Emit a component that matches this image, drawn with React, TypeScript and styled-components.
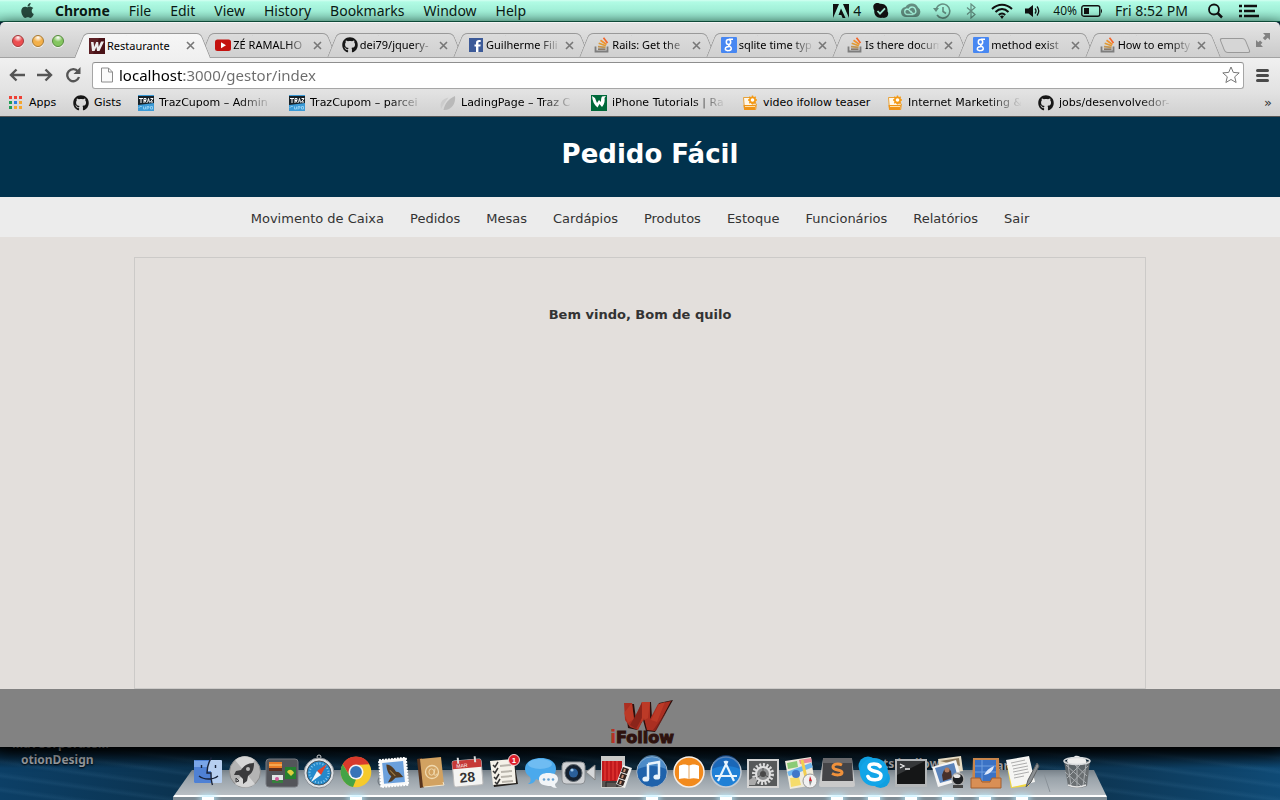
import React from "react";
import styled, { createGlobalStyle } from "styled-components";
import { FaApple, FaGithub } from "react-icons/fa";

const Global = createGlobalStyle`
  *, *::before, *::after { box-sizing: border-box; }
  body { margin: 0; background: #0b2436; }
  button { border: 0; padding: 0; background: none; font: inherit; color: inherit; cursor: pointer; }
  a { color: inherit; text-decoration: none; }
  svg { display: block; flex: none; }
`;

const system = `"Noto Sans", "Open Sans", sans-serif`;
const web = `Verdana, "DejaVu Sans", sans-serif`;

const Screen = styled.div`
  display: flex;
  flex-direction: column;
  min-height: 100vh;
  overflow: hidden;
  font-family: ${system};
`;

/* ---------- menu bar ---------- */

const MenuBar = styled.div`
  display: flex;
  align-items: center;
  justify-content: space-between;
  height: 22px;
  padding: 0 21px 0 19px;
  border-bottom: 1px solid #14654c;
  background: linear-gradient(#d4fff2 0, #b0fbe4 2px, #a2f0d8 11px, #86d6bd 21px);
  color: #0b1a15;
  font-size: 14px;
  line-height: 20px;
  white-space: nowrap;
`;

const Menus = styled.nav`
  display: flex;
  align-items: center;
  gap: 19px;
`;

const MenuItem = styled.button<{ $bold?: boolean }>`
  font-weight: ${(p) => (p.$bold ? 700 : 400)};
`;

const Status = styled.div`
  display: flex;
  align-items: center;
  gap: 12px;
`;

const StatusButton = styled.button<{ $faded?: boolean }>`
  display: flex;
  align-items: center;
  gap: 4px;
  opacity: ${(p) => (p.$faded ? 0.45 : 1)};
`;

const Percent = styled.span`
  font-size: 12px;
`;

const Clock = styled.time`
  min-width: 76px;
  font-size: 14px;
`;

/* ---------- browser window ---------- */

const Window = styled.div`
  display: flex;
  flex: 1;
  flex-direction: column;
  position: relative;
  z-index: 1;
  box-shadow: 0 4px 14px #000;
`;

const TabStrip = styled.div`
  display: flex;
  align-items: flex-end;
  height: 36px;
  padding: 0 10px 0 12px;
  border-top: 1px solid #f4f4f4;
  border-radius: 5px 5px 0 0;
  background: linear-gradient(#e4e4e4, #cacaca 34px, #a2a2a2 34px);
`;

const Lights = styled.div`
  display: flex;
  gap: 8px;
  width: 67px;
  padding-bottom: 11px;
`;

const Light = styled.button<{ $color: string; $edge: string }>`
  width: 12px;
  height: 12px;
  border: 1px solid ${(p) => p.$edge};
  border-radius: 50%;
  background: radial-gradient(circle at 50% 15%, #fff 0, transparent 45%), ${(p) => p.$color};
  box-shadow: 0 1px 0 #f2f2f2;
`;

const Tabs = styled.div`
  display: flex;
  flex: 1;
  min-width: 0;
`;

const Tab = styled.div<{ $active?: boolean }>`
  display: flex;
  flex: 1;
  align-items: center;
  gap: 2px;
  position: relative;
  z-index: ${(p) => (p.$active ? 2 : 1)};
  min-width: 0;
  height: ${(p) => (p.$active ? 25 : 24)}px;
  margin-bottom: ${(p) => (p.$active ? 0 : 1)}px;
  padding: 0 10px;
  color: #000;
  font-size: 11px;
  line-height: 16px;

  &::before,
  &::after {
    content: "";
    position: absolute;
    z-index: -1;
    top: 0;
    bottom: 0;
    border-top: 1px solid #999;
    background: ${(p) => (p.$active ? "linear-gradient(#f6f6f6, #f0f0f0)" : "linear-gradient(#dcdcdc, #d0d0d0)")};
  }
  &::before {
    left: 0;
    right: 50%;
    border-left: 1px solid #999;
    border-top-left-radius: 5px;
    transform: skewX(-22deg);
  }
  &::after {
    left: 40%;
    right: 0;
    border-right: 1px solid #999;
    border-top-right-radius: 5px;
    transform: skewX(22deg);
  }
`;

const Fade = styled.span<{ $width?: number; $fade?: boolean }>`
  display: block;
  flex: ${(p) => (p.$width ? "none" : 1)};
  width: ${(p) => (p.$width ? `${p.$width}px` : "auto")};
  min-width: 0;
  white-space: nowrap;
  mask-image: ${(p) => (p.$fade ? "linear-gradient(90deg, #000 70%, transparent)" : "none")};
`;

const Close = styled.button`
  padding-left: 2px;
`;

const NewTab = styled.button`
  width: 26px;
  height: 15px;
  margin: 0 8px 5px 6px;
  border: 1px solid #999;
  border-radius: 3px;
  background: #d6d6d6;
  transform: skewX(22deg);
`;

const FullScreen = styled.button`
  padding-bottom: 11px;
`;

const Toolbar = styled.div`
  display: flex;
  align-items: center;
  height: 34px;
  padding: 0 11px 0 9px;
  background: linear-gradient(#f0f0f0, #e2e2e2);
`;

const NavButtons = styled.div`
  display: flex;
  align-items: center;
  gap: 12px;
  width: 83px;
`;

const Omnibox = styled.div`
  display: flex;
  flex: 1;
  align-items: center;
  gap: 6px;
  height: 27px;
  margin-right: 12px;
  padding: 0 3px 0 8px;
  border: 1px solid #a6a6a6;
  border-top-color: #8e8e8e;
  border-radius: 3px;
  background: #fff;
`;

const Address = styled.input`
  flex: 1;
  min-width: 0;
  height: 24px;
  padding: 0;
  border: 0;
  outline: 0;
  background: linear-gradient(90deg, #000 65px, #6b6b6b 65px);
  background-clip: text;
  -webkit-text-fill-color: transparent;
  font: 15px/24px ${system};
`;

const Bookmarks = styled.div`
  display: flex;
  align-items: center;
  gap: 16px;
  height: 25px;
  padding: 0 8px 2px;
  border-bottom: 1px solid #555;
  background: linear-gradient(#e2e2e2, #d0d0d0);
  color: #000;
  font-family: "DejaVu Sans", sans-serif;
  font-size: 11px;
  line-height: 16px;
`;

const Bookmark = styled.a`
  display: flex;
  align-items: center;
  gap: 5px;
  min-width: 0;
`;

const More = styled.button`
  margin-left: auto;
  color: #333;
  font-size: 13px;
`;

/* ---------- web page ---------- */

const Page = styled.div`
  display: flex;
  flex: 1;
  flex-direction: column;
  background: #e3dfdc;
  color: #333;
  font-family: ${web};
`;

const PageHeader = styled.header`
  height: 80px;
  padding: 18px 0 0 20px;
  background: #01324d;
  color: #fff;
  text-align: center;
`;

const Title = styled.h1`
  margin: 0;
  font-size: 26px;
  line-height: 38px;
`;

const PageNav = styled.nav`
  display: flex;
  flex-wrap: wrap;
  align-items: center;
  justify-content: center;
  gap: 0 26px;
  min-height: 40px;
  padding-top: 3px;
  background: #ececec;
  font-size: 13px;
  line-height: 20px;
`;

const Main = styled.main`
  display: flex;
  flex: 1;
  flex-direction: column;
  align-items: center;
  padding-top: 20px;
`;

const Panel = styled.section`
  flex: 1;
  width: 90%;
  max-width: 1012px;
  padding-top: 47px;
  border: 1px solid #cccac8;
  text-align: center;
`;

const Welcome = styled.h2`
  margin: 0;
  font-size: 13px;
  line-height: 20px;
`;

const PageFooter = styled.footer`
  display: flex;
  justify-content: center;
  height: 58px;
  padding: 8px 0 0 6px;
  background: #828282;
`;

/* ---------- desktop and dock ---------- */

const Desktop = styled.div`
  display: flex;
  justify-content: center;
  position: relative;
  height: 53px;
  overflow: hidden;
  background:
    linear-gradient(#02080d, transparent 40%),
    repeating-linear-gradient(8deg, transparent 0 7px, rgba(120, 180, 220, 0.08) 10px, transparent 14px),
    linear-gradient(90deg, #0c3f66 0, #0b3350 14%, #0a2436 35%, #0a2334 65%, #0d3552 85%, #0f4a75 100%);
`;

const DesktopLabel = styled.span<{ $left: number; $top: number }>`
  position: absolute;
  left: ${(p) => p.$left}px;
  top: ${(p) => p.$top}px;
  color: #999da1;
  font-size: 12px;
  font-weight: 700;
  line-height: 16px;
  text-align: center;
  text-shadow: 0 1px 2px #000;
  white-space: nowrap;
`;

const Dock = styled.div`
  display: flex;
  position: relative;
  width: 934px;
  padding: 0 12px 0 16px;

  &::before {
    content: "";
    position: absolute;
    left: 0;
    right: 0;
    top: 23px;
    height: 27px;
    clip-path: polygon(19px 0, calc(100% - 13px) 0, 100% 100%, 0 100%);
    background: linear-gradient(#78828a, #99a2a9 8px, #b9bfc4 25px, #fff 25px);
  }
  &::after {
    content: "";
    position: absolute;
    left: 0;
    right: 0;
    top: 50px;
    height: 3px;
    background: #7f8c95;
  }
`;

const DockItem = styled.button<{ $running?: boolean }>`
  display: flex;
  flex: none;
  flex-direction: column;
  align-items: center;
  justify-content: space-between;
  position: relative;
  z-index: 1;
  width: 37px;
  height: 53px;
  padding-top: 7px;

  &::after {
    content: "";
    display: ${(p) => (p.$running ? "block" : "none")};
    width: 12px;
    height: 3px;
    background: #fff;
    box-shadow: 0 0 6px 2px #b8ecff;
  }
`;

const Separator = styled.div`
  position: relative;
  flex: none;
  width: 18px;
  height: 53px;
`;

/* ---------- favicons ---------- */

const WIcon = () => (
  <svg width="16" height="16" viewBox="0 0 16 16">
    <rect width="16" height="16" fill="#4a1217" />
    <path d="M0 0h10L4 16H0z" fill="#6a2a2e" opacity=".6" />
    <path d="M2 4h2.500l.7 5 2-5h2l.5 5 2.300-5.500H15L10.500 13H8l-.6-4-1.800 4H3z" fill="#eee" />
  </svg>
);
const TubeIcon = () => (
  <svg width="16" height="16" viewBox="0 0 16 16">
    <rect y="2.500" width="16" height="11.500" rx="2.500" fill="#c4120f" />
    <path d="M6 5.200v6l5-3z" fill="#fff" />
  </svg>
);
const FbIcon = () => (
  <svg width="16" height="16" viewBox="0 0 16 16">
    <rect x="1" y="1" width="14" height="14" fill="#3c5a98" />
    <path d="M8 15V9.500H6.500v-2H8V6c0-2.200 1-3 3-3h1.700v2h-1.200c-.9 0-1.100.4-1.100 1.200v1.300h2.300l-.3 2h-2V15z" fill="#fff" />
  </svg>
);
const StackIcon = () => (
  <svg width="16" height="16" viewBox="0 0 16 16" fill="none" strokeWidth="1.700">
    <path d="M1.500 9.500v5h12v-5" stroke="#7d7d7d" strokeWidth="1.800" />
    <path d="M4 12.200h7.500" stroke="#8a7a68" />
    <path d="M4 9.600l7.600.8" stroke="#c39552" />
    <path d="M4.700 6.300l7.100 2.500" stroke="#df9a33" />
    <path d="M6.500 3.300l6 4.200" stroke="#f0912b" />
    <path d="M9.500.800l4 5.200" stroke="#f2652a" />
  </svg>
);
const GoogleIcon = () => (
  <svg width="16" height="16" viewBox="0 0 16 16">
    <rect width="16" height="16" rx="1" fill="#4787f2" />
    <g fill="none" stroke="#fff" strokeWidth="1.500">
      <ellipse cx="7.500" cy="5" rx="2.200" ry="2.500" />
      <path d="M8 2.200h4M8 7.500c-1.600 1.400 2.600 1.600 2.300 4.100-.3 2.700-6 2.600-6 .3 0-2 2.200-2.400 4.400-2.300" />
    </g>
  </svg>
);
const TrazIcon = () => (
  <svg width="16" height="16" viewBox="0 0 16 16">
    <rect width="16" height="16" fill="#3b9ad6" />
    <path d="M0 1h16v7L0 10z" fill="#182228" />
    <path d="M1 3.500h4M3 3.500v4.500M6 8V3.500h2v2H6l2.500 2M9.500 7.500l1-4 1 4M12.500 3.500h2.500l-2.500 3.500h2.500" stroke="#fff" fill="none" />
    <path d="M1 13c0-2 3-2 3-1M5.500 11.500v2.500h2v-2.500M9 14.500v-3h2v1.500h-2M12.500 11.500h2v2.500h-2z" stroke="#8fcdf0" fill="none" />
  </svg>
);
const LeafIcon = () => (
  <svg width="16" height="16" viewBox="0 0 16 16">
    <path d="M1 14C-.5 7 2.500 4 8.500 2.500 5 7 3 10 1 14z" fill="#ccc" />
    <path d="M3.500 15C5 8 8.500 4 15 1c1 7-3 14.500-11.500 14z" fill="#b9b9b9" />
  </svg>
);
const TutorIcon = () => (
  <svg width="16" height="16" viewBox="0 0 16 16">
    <rect width="16" height="16" fill="#00693a" />
    <path d="M1 1c.5 5 2 9 5.500 11.500L8.500 9l2.500 3c2.500-3 3-6 2.500-9L15 1l-4 .5c-1 2-1 3-1 5.500L8 5 6 8 4 3z" fill="#fff" />
  </svg>
);
const ShopIcon = () => (
  <svg width="16" height="16" viewBox="0 0 16 16">
    <path d="M1.500 2.500h8v6l5 .5-.8 5.500H2.500z" fill="#fff8ea" stroke="#e6a23c" />
    <path d="M1.500 10h12.500l-.8 5h-11z" fill="#ef9418" />
    <path d="M3 11.500h10" stroke="#ffe0a5" />
    <circle cx="10.500" cy="5" r="3.500" fill="#f49a16" />
    <path d="M10.500.5v9M6 5h9M7.300 1.800l6.400 6.400M13.700 1.800L7.300 8.200" stroke="#f49a16" strokeWidth="1.400" />
    <circle cx="10.500" cy="5" r="1.800" fill="#fff" />
  </svg>
);
const AppsIcon = () => (
  <svg width="16" height="16" viewBox="0 0 16 16">
    {["#ee4035", "#ee4035", "#ee4035", "#1f9d55", "#2b7de0", "#f4a52c", "#1f9d55", "#f4a52c", "#f4a52c"].map((c, i) => (
      <rect key={i} x={1 + (i % 3) * 5} y={1 + Math.floor(i / 3) * 5} width="3" height="3" fill={c} />
    ))}
  </svg>
);
const Cat = () => <FaGithub size={16} color="#161616" />;

/* ---------- dock drawings ---------- */

const Pic = ({ children }: { children: React.ReactNode }) => (
  <svg width="36" height="36" viewBox="0 0 36 36">{children}</svg>
);

const dock: { name: string; on?: boolean; art: React.ReactNode }[] = [
  { name: "Finder", on: true, art: <>
    <rect x="4" y="6" width="28" height="23" rx="1" fill="#b7cff0" />
    <path d="M5 6h15c-2 4-3 7-3 11h4v12H5c-1 0-1-1-1-1V7c0-1 1-1 1-1z" fill="#4f81d4" />
    <path d="M4 7h15l-2 6H4z" fill="#79a5e8" />
    <path d="M21.500 3.500C18 9 17 13 17 19h4c0 4 0 8 1.500 12M9 22c5 4 14 4 19 0M11.500 11v3M25.500 11v3" fill="none" stroke="#182238" strokeWidth="1.400" />
  </> },
  { name: "Launchpad", art: <>
    <circle cx="18" cy="18" r="15.500" fill="#b4b4b4" stroke="#8b8b8b" />
    <path d="M18 18L8 6C15 0 22 2 28 6zM18 18l10 12c-6 5-14 4-20 0z" fill="#dedede" opacity=".8" />
    <path d="M27 9c-7 0-10 3-13 7l-5 1-2 4 5 0 4 4 0 5 4-3 1-5c4-3 6-6 6-13z" fill="#3b3b3d" />
    <circle cx="21" cy="15" r="2" fill="#bbb" /><path d="M9 24l3 3-3 1z" stroke="#3b3b3d" fill="none" />
  </> },
  { name: "Mission Control", art: <>
    <rect x="2" y="5" width="32" height="28" rx="3" fill="#53555a" stroke="#777a80" />
    <rect x="5" y="8" width="13" height="9" fill="#e77b26" /><path d="M5 14h13v3H5z" fill="#5b2c1c" /><path d="M5 11h13" stroke="#ffd27a" />
    <rect x="21" y="13" width="11" height="12" fill="#25802f" /><path d="M23 18c2-4 6-2 7 1l-3 3z" fill="#ddcf3e" />
    <rect x="8" y="21" width="11" height="8" fill="#dfe6e5" /><path d="M8 26h11v3H8z" fill="#377f3e" /><circle cx="13" cy="25" r="2" fill="#d35a9b" />
  </> },
  { name: "Safari", art: <>
    <circle cx="18" cy="3" r="2" fill="none" stroke="#ccc" />
    <circle cx="18" cy="19" r="15" fill="#dfe2e5" stroke="#878d93" />
    <circle cx="18" cy="19" r="12" fill="#2489cb" stroke="#43525d" />
    <circle cx="18" cy="19" r="9.500" fill="none" stroke="#8fcdf0" strokeDasharray="1 2" strokeWidth="2" />
    <path d="M26 10l-6 11-4-4z" fill="#e4432b" /><path d="M10 28l6-11 4 4z" fill="#f3f5f7" />
  </> },
  { name: "Google Chrome", on: true, art: <>
    <circle cx="18" cy="18" r="15.300" fill="#f6ca2c" />
    <path d="M4.700 10.300A15.300 15.300 0 0 1 31.300 10.300L18 11 11.500 21.500z" fill="#d93a2c" />
    <path d="M4.700 10.300l6.800 11.400L18 25.500l-3 7.500A15.300 15.300 0 0 1 4.700 10.300z" fill="#45a346" />
    <circle cx="18" cy="18" r="7.500" fill="#f4f4f4" /><circle cx="18" cy="18" r="5.900" fill="#3774b8" />
  </> },
  { name: "Mail", art: <>
    <circle cx="9" cy="27" r="6" fill="none" stroke="#687078" />
    <g transform="rotate(-5 18 18)"><rect x="5" y="5" width="27" height="27" fill="#f8f8f8" stroke="#fff" strokeWidth="2" strokeDasharray="2 1" /><rect x="8" y="8" width="21" height="21" fill="#6ba0dc" />
    <path d="M12 10c5 1 7 4 9 8 4 0 5 4 7 6l-8 0-4 3-4 1 4-6c-3-2-4-7-4-12z" fill="#523a22" /><path d="M15 16l5 6" stroke="#a98448" /></g>
  </> },
  { name: "Contacts", art: <>
    <path d="M5 5l5-1 3 29-5 1z" fill="#57331c" />
    <path d="M8 5l21-2 3 28-21 2z" fill="#d2a261" /><path d="M12 33l20-2-1-3" stroke="#f2e6cd" fill="none" />
    <circle cx="20" cy="18" r="6.500" fill="none" stroke="#f0d9ae" strokeWidth="1.300" /><path d="M23 14.500l-1 6c1 1.500 3 .5 3-1" fill="none" stroke="#f0d9ae" /><ellipse cx="19.500" cy="18" rx="2.600" ry="3.200" fill="none" stroke="#f0d9ae" />
  </> },
  { name: "Calendar", art: <g transform="rotate(-5 18 18)">
    <rect x="4" y="6" width="29" height="26" rx="2" fill="#f4f4f2" stroke="#b9b9b9" />
    <path d="M4 8q0-2 2-2h25q2 0 2 2v6H4z" fill="#c63a38" />
    <path d="M10 3v6M27 3v6" stroke="#ddd" strokeWidth="2" />
    <text x="8" y="13" fontSize="5" fill="#fff" fontFamily="Liberation Sans">MAR</text>
    <text x="18" y="28" fontSize="14" fontWeight="700" textAnchor="middle" fill="#333" fontFamily="Liberation Sans">28</text>
  </g> },
  { name: "Reminders", art: <>
    <path d="M4 7l24-2 4 25-24 3z" fill="#24211e" /><path d="M4 7l24-2 2 24-23 2z" fill="#f4f1e9" />
    <path d="M7 11l2 2 3-5M7 17l2 2 3-5M8 23l2 2 3-5M9 28l2 2 3-5" fill="none" stroke="#333" strokeWidth="1.500" />
    <path d="M14 12l11-1M15 18l11-1M15 23l11-1M16 28l11-1" stroke="#b9b5ac" strokeWidth="2" />
    <circle cx="28" cy="6" r="5.500" fill="#dc1f2b" stroke="#f3dada" />
    <text x="28" y="9" fontSize="8" fontWeight="700" textAnchor="middle" fill="#fff" fontFamily="Liberation Sans">1</text>
  </> },
  { name: "Messages", art: <>
    <path d="M18 4c9 0 15 4 15 11s-7 11-15 11c-2 0-3 0-5-1-1 3-4 5-8 5 3-2 3-4 2-7-3-2-5-5-5-8C2 8 9 4 18 4z" fill="#4aa9ec" />
    <ellipse cx="17" cy="10" rx="12" ry="5" fill="#93d0f8" opacity=".5" />
    <path d="M25 19c6 0 10 2 10 6 0 3-2 4-3 5 0 2 1 3 2 4-3 0-5-1-6-2-8 0-12-2-12-7 0-4 4-6 9-6z" fill="#f2f5f8" />
    <circle cx="21" cy="25.500" r="1.300" fill="#6aa3d0" /><circle cx="25.500" cy="25.500" r="1.300" fill="#6aa3d0" /><circle cx="30" cy="25.500" r="1.300" fill="#6aa3d0" />
  </> },
  { name: "FaceTime", art: <>
    <path d="M26 18l9-7v15z" fill="#d6d8da" stroke="#888" />
    <rect x="2" y="8" width="23" height="22" rx="4" fill="#cfd1d4" stroke="#8b8f93" />
    <circle cx="13.500" cy="19" r="8.500" fill="#14202f" stroke="#5d6469" /><circle cx="13.500" cy="19" r="4.500" fill="#2a5f9a" /><circle cx="12" cy="16" r="1.600" fill="#9fc8ec" />
  </> },
  { name: "Photo Booth", art: <>
    <rect x="4" y="2" width="24" height="32" fill="#c9c9c7" /><rect x="5" y="7" width="20" height="20" fill="#c0191c" />
    <path d="M8 7v19M12 7v20M16 7v19M20 7v20" stroke="#de3530" strokeWidth="1.500" /><path d="M5 27h20v6H5z" fill="#5a5552" /><path d="M9 33v-5h11v5" stroke="#222" fill="none" />
    <path d="M26 11l9 3-7 20-9-4z" fill="#f0f0ee" /><path d="M26 13l6 2-2 5-6-2zM24 19l6 2-2 5-6-2zM22 25l6 2-2 5-6-2z" fill="#312421" /><path d="M28 15l-1 3M26 21l-1 3M24 27l-1 3" stroke="#c78f73" strokeWidth="2" />
  </> },
  { name: "iTunes", on: true, art: <>
    <circle cx="18" cy="18" r="15.300" fill="#1f62ab" stroke="#a9b4c0" /><path d="M4 15a14 14 0 0 1 28 0c-9-4-19-4-28 0z" fill="#6aa7dc" opacity=".6" />
    <path d="M14 10l11-2v14M14 10v15" stroke="#e8f3fb" strokeWidth="2.500" fill="none" /><ellipse cx="11.800" cy="25" rx="3.400" ry="2.600" fill="#e8f3fb" /><ellipse cx="22.800" cy="23" rx="3.400" ry="2.600" fill="#e8f3fb" />
  </> },
  { name: "iBooks", art: <>
    <circle cx="18" cy="18" r="15" fill="#f28a1d" stroke="#f6efe8" strokeWidth="1.500" />
    <path d="M8 12c3-2 8-2 10 0 2-2 7-2 10 0v13c-4-1-7-1-10 0-3-1-6-1-10 0z" fill="#fff" /><path d="M18 12v13" stroke="#e4a35d" />
  </> },
  { name: "App Store", on: true, art: <>
    <circle cx="18" cy="18" r="15" fill="#1f80d6" stroke="#c4ccd5" strokeWidth="1.500" /><path d="M4 15a14 14 0 0 1 28 0c-9-4-19-4-28 0z" fill="#1757a4" opacity=".6" />
    <path d="M19.500 7L10 27M16.500 7L26 27M7 22h22" stroke="#e9f5fd" strokeWidth="2.200" fill="none" />
  </> },
  { name: "System Preferences", art: <>
    <rect x="2" y="5" width="32" height="29" fill="#d4d4d4" /><rect x="4" y="7" width="28" height="25" fill="#57595a" />
    <circle cx="18" cy="20" r="9" fill="none" stroke="#dadada" strokeWidth="4" strokeDasharray="2 1.500" /><circle cx="18" cy="20" r="7" fill="#8d8f90" stroke="#e0e0e0" strokeWidth="2" />
    <circle cx="18" cy="20" r="3" fill="#484848" /><path d="M18 14v4M12.500 23l4-2M23.500 23l-4-2" stroke="#555" /><path d="M4 26l5-3 3 3-2 5H4z" fill="#aaa" />
  </> },
  { name: "Maps", art: <>
    <path d="M3 7l26-4 4 28-25 4z" fill="#f0ecdd" /><path d="M5 9l10-2 1 6-10 2z" fill="#8acb76" /><path d="M17 6l12-2 1 4-12 2z" fill="#eb8c9d" />
    <path d="M6 20l24-9" stroke="#70b7ee" strokeWidth="5" /><path d="M20 6l6 26" stroke="#f2cf50" strokeWidth="3" /><path d="M8 24l9-1 2 8-10 2z" fill="#f5dc6c" />
    <circle cx="14" cy="20" r="4" fill="#4078c9" /><circle cx="28" cy="27" r="7" fill="#f1f1f1" stroke="#999" /><path d="M28 22l2 5h-3z" fill="#d3232d" /><path d="M28 32l2-5h-3z" fill="#888" />
  </> },
  { name: "Sublime Text", on: true, art: <>
    <path d="M4 5h29l3 26q0 2-2 2H2q-2 0-2-2z" fill="#c9c9c9" /><path d="M4 4h29l1 23H3z" fill="#444447" /><path d="M4 4h29v5H4z" fill="#68686b" />
    <path d="M23 11c-4-2-9-1-9 2 0 4 9 2 9 5.500 0 3-6 3-10 1" fill="none" stroke="#f0913b" strokeWidth="3" />
  </> },
  { name: "Skype", on: true, art: <>
    <circle cx="12" cy="12" r="9.500" fill="#0f9fe0" /><circle cx="24.500" cy="24.500" r="9.500" fill="#0f9fe0" /><circle cx="18" cy="18" r="14" fill="#12a5e8" />
    <path d="M24 12.500c-2-3.500-11-3.500-11 .5 0 5.500 12 3 12 8.500 0 5.500-11 5.500-13 1" fill="none" stroke="#fff" strokeWidth="3.600" strokeLinecap="round" />
  </> },
  { name: "Terminal", on: true, art: <>
    <rect x="2" y="5" width="32" height="28" fill="#b3b6b8" /><rect x="4" y="7" width="28" height="23" fill="#151617" /><path d="M4 7h28L4 21z" fill="#353739" />
    <path d="M7 10l4 2-4 2M12 15h5" stroke="#eee" strokeWidth="1.300" fill="none" />
  </> },
  { name: "Preview", on: true, art: <>
    <path d="M8 5l23-3 2 15-23 4z" fill="#e6dcc4" /><path d="M10 7l19-3 1 8z" fill="#8b795c" />
    <path d="M2 13l24-7 6 20-24 7z" fill="#f5f5f5" /><path d="M5 14l19-5 4 15-18 5z" fill="#5a83bb" /><path d="M14 16l4-2 3 3 1 7-9 3-1-6z" fill="#47302a" /><circle cx="17" cy="16" r="2.500" fill="#b17b5e" />
    <circle cx="28" cy="25" r="6" fill="#1c1e21" stroke="#aaa" strokeWidth="1.500" /><ellipse cx="27" cy="22" rx="3.500" ry="2" fill="#e9e9e9" /><path d="M23 31h10v3H23z" fill="#444" />
  </> },
  { name: "Inbox", on: true, art: <>
    <path d="M6 4h26l1 30H5z" fill="#c8864d" /><rect x="8" y="6" width="21" height="21" fill="#3a72c5" /><path d="M8 12h21M8 18h21M15 6v21" stroke="#6f9fe0" />
    <path d="M17 21c2-4 5-7 10-9-1 5-4 8-10 9z" fill="#dce8fb" /><path d="M4 24h9l2 4h8l2-4h9v10H4z" fill="#d98f55" stroke="#a25e31" />
  </> },
  { name: "TextEdit", on: true, art: <>
    <path d="M3 12l4 22 18-2-2-20z" fill="#f2d83e" /><path d="M2 6l23-4 6 26-23 5z" fill="#f5f5f3" />
    <path d="M7 9l14-3M8 12l15-3M9 15l15-3M9 18l15-3M10 21l15-3M10 24l10-2" stroke="#9a9a9a" strokeWidth=".8" /><path d="M33 9l-9 17-2 7 5-5 8-16z" fill="#8d9194" stroke="#5b5e60" />
  </> },
];

const Trash = () => (
  <Pic>
    <path d="M5 7h26l-3 25q-10 4-19 0z" fill="#65696c" opacity=".9" />
    <path d="M7 11l20 18M6 18l16 14M14 9l14 13M29 12L11 31M24 8L8 24M9 10l3 22M18 10v23M27 10l-3 22" stroke="#a9adb0" />
    <path d="M8 7c1-5 6-2 8-5 4-1 5 2 8 2 4 0 4 5 2 6H10z" fill="#eee" /><ellipse cx="18" cy="7" rx="13" ry="3.500" fill="none" stroke="#d5d8da" strokeWidth="1.500" />
    <path d="M9 31q9 4 18 0" stroke="#e4e4e4" fill="none" strokeWidth="1.500" />
  </Pic>
);

/* ---------- data ---------- */

const menus = ["File", "Edit", "View", "History", "Bookmarks", "Window", "Help"];

const tabs = [
  { icon: <WIcon />, label: "Restaurante", fade: false },
  { icon: <TubeIcon />, label: "ZÉ RAMALHO", fade: true },
  { icon: <Cat />, label: "dei79/jquery-", fade: true },
  { icon: <FbIcon />, label: "Guilherme Fili", fade: true },
  { icon: <StackIcon />, label: "Rails: Get the", fade: true },
  { icon: <GoogleIcon />, label: "sqlite time typ", fade: true },
  { icon: <StackIcon />, label: "Is there docum", fade: true },
  { icon: <GoogleIcon />, label: "method exist", fade: true },
  { icon: <StackIcon />, label: "How to empty", fade: true },
];

const bookmarks = [
  { icon: <AppsIcon />, label: "Apps", width: 28 },
  { icon: <Cat />, label: "Gists", width: 28 },
  { icon: <TrazIcon />, label: "TrazCupom – Admin", width: 114, fade: true },
  { icon: <TrazIcon />, label: "TrazCupom – parcei", width: 114, fade: true },
  { icon: <LeafIcon />, label: "LadingPage – Traz C", width: 114, fade: true },
  { icon: <TutorIcon />, label: "iPhone Tutorials | Ra", width: 114, fade: true },
  { icon: <ShopIcon />, label: "video ifollow teaser", width: 108 },
  { icon: <ShopIcon />, label: "Internet Marketing &", width: 114, fade: true },
  { icon: <Cat />, label: "jobs/desenvolvedor-", width: 114, fade: true },
];

const pages = ["Movimento de Caixa", "Pedidos", "Mesas", "Cardápios", "Produtos", "Estoque", "Funcionários", "Relatórios", "Sair"];

/* ---------- app ---------- */

const StatusArea = () => (
  <Status>
    <StatusButton aria-label="Adobe updates">
      <svg width="16" height="14" viewBox="0 0 16 14"><path d="M0 0h6L0 14zM10 0h6v14zM8 4.500L12.500 14H9.600L8.300 11H5.500z" fill="#111" /></svg>
      4
    </StatusButton>
    <StatusButton aria-label="Skype">
      <svg width="16" height="16" viewBox="0 0 16 16"><path d="M1 1.500C3-.5 6 0 7 .8c5-.5 8 3 7.500 7.500 2 3-.2 7.500-5 6.500C4 15.500.8 12 1.300 7.500.3 5.500-.3 3 1 1.500z" fill="#111" /><path d="M4.500 8l2.500 2.700 5-5.400" stroke="#9fe8d2" strokeWidth="1.800" fill="none" /></svg>
    </StatusButton>
    <StatusButton $faded aria-label="Creative Cloud">
      <svg width="20" height="16" viewBox="0 0 20 16" fill="none"><path d="M5.500 14A5 5 0 0 1 4.500 4 7 7 0 0 1 17 4.500 5.200 5.200 0 0 1 14.500 14z" fill="#111" /><path d="M12.500 11.500H6A2.800 2.800 0 0 1 6 6c2.200 0 3 2 4.200 3.500M8 6c1.500-3 6-2.500 6.500.8a3.200 3.200 0 0 1-1 4c-2 0-3-1-4-3" stroke="#a6f2da" strokeWidth="1.300" /></svg>
    </StatusButton>
    <StatusButton $faded aria-label="Time Machine">
      <svg width="18" height="16" viewBox="0 0 18 16" fill="none" stroke="#111" strokeWidth="1.600"><path d="M3.500 5A7 7 0 1 1 4 12M10 4v4.500l3 2" /><path d="M0 5h6L3 9z" fill="#111" stroke="none" /></svg>
    </StatusButton>
    <StatusButton $faded aria-label="Bluetooth"><svg width="16" height="16" viewBox="0 0 16 16" fill="none" stroke="#111" strokeWidth="1.200"><path d="M4 4.500l8 7-4 3.500V1l4 3.500-8 7" /></svg></StatusButton>
    <StatusButton aria-label="Wi-Fi">
      <svg width="22" height="16" viewBox="0 0 22 16" fill="none" stroke="#111" strokeWidth="2"><path d="M1 6C7 .3 15 .3 21 6M4.500 9c4-4 9-4 13 0M7.800 12c2-2 4.400-2 6.400 0" /><path d="M9 13.300q2-1.500 4 0L11 16z" fill="#111" stroke="none" /></svg>
    </StatusButton>
    <StatusButton aria-label="Volume">
      <svg width="16" height="14" viewBox="0 0 16 14"><path d="M0 4.500h3.500L8 1v12L3.500 9.500H0z" fill="#111" /><path d="M10 4.500q2 2.500 0 5M12 2.500q3.500 4.500 0 9" stroke="#111" strokeWidth="1.300" fill="none" /></svg>
    </StatusButton>
    <StatusButton aria-label="Battery">
      <Percent>40%</Percent>
      <svg width="22" height="12" viewBox="0 0 22 12"><rect x=".8" y=".8" width="18" height="10.400" rx="2" fill="none" stroke="#111" strokeWidth="1.400" /><rect x="3" y="3" width="5" height="6" fill="#111" /><path d="M20 3.500q2 2.500 0 5z" fill="#111" /></svg>
    </StatusButton>
    <Clock>Fri 8:52 PM</Clock>
    <StatusButton aria-label="Spotlight">
      <svg width="24" height="16" viewBox="0 0 24 16" fill="none" stroke="#111"><circle cx="11" cy="6.500" r="5" strokeWidth="1.800" /><path d="M14.500 10l4.500 4.500" strokeWidth="2.500" /></svg>
    </StatusButton>
    <StatusButton aria-label="Notification Center">
      <svg width="20" height="14" viewBox="0 0 20 14" stroke="#111" strokeWidth="2.400"><path d="M0 2h3M5 2h13M0 7h3M5 7h11M0 12h3M5 12h15" /></svg>
    </StatusButton>
  </Status>
);

export default function App() {
  return (
    <Screen>
      <Global />
      <MenuBar>
        <Menus>
          <MenuItem aria-label="Apple"><FaApple size={17} color="#27483d" /></MenuItem>
          <MenuItem $bold>Chrome</MenuItem>
          {menus.map((m) => <MenuItem key={m}>{m}</MenuItem>)}
        </Menus>
        <StatusArea />
      </MenuBar>

      <Window>
        <TabStrip>
          <Lights>
            <Light $color="#ec4e50" $edge="#a33a3c" aria-label="Close window" />
            <Light $color="#f3b04a" $edge="#a87a34" aria-label="Minimize window" />
            <Light $color="#84c660" $edge="#578a3f" aria-label="Zoom window" />
          </Lights>
          <Tabs>
            {tabs.map((t, i) => (
              <Tab key={i} $active={i === 0}>
                {t.icon}
                <Fade $fade={t.fade}>{t.label}</Fade>
                <Close aria-label="Close tab">
                  <svg width="9" height="9" viewBox="0 0 9 9" stroke="#777" strokeWidth="1.600"><path d="M1 1l7 7M8 1L1 8" /></svg>
                </Close>
              </Tab>
            ))}
          </Tabs>
          <NewTab aria-label="New tab" />
          <FullScreen aria-label="Full screen">
            <svg width="14" height="14" viewBox="0 0 14 14" fill="#828282"><path d="M7 0h7v7l-2.300-2.300-2.600 2.600-2.300-2.300 2.600-2.600z" /><path d="M7 14H0V7l2.300 2.300 1.800-1.800 2.300 2.300-1.800 1.800z" /></svg>
          </FullScreen>
        </TabStrip>

        <Toolbar>
          <NavButtons>
            <button aria-label="Back"><svg width="16" height="14" viewBox="0 0 16 14" fill="none" stroke="#555" strokeWidth="2.400"><path d="M7.500 1.500L2 7l5.500 5.500M2 7h14" /></svg></button>
            <button aria-label="Forward"><svg width="16" height="14" viewBox="0 0 16 14" fill="none" stroke="#555" strokeWidth="2.400"><path d="M8.500 1.500L14 7l-5.500 5.500M14 7H0" /></svg></button>
            <button aria-label="Reload"><svg width="16" height="16" viewBox="0 0 16 16" fill="none" stroke="#555" strokeWidth="2.300"><path d="M13 4.500A6 6 0 1 0 14 10" /><path d="M15.500 0v7h-7z" fill="#555" stroke="none" /></svg></button>
          </NavButtons>
          <Omnibox>
            <svg width="12" height="16" viewBox="0 0 12 16" fill="#fafafa" stroke="#8c8c8c"><path d="M.5 1h7L11.500 5v10H.5zM7.500 1v4h4" /></svg>
            <Address aria-label="Address" defaultValue="localhost:3000/gestor/index" />
            <button aria-label="Bookmark this page">
              <svg width="18" height="18" viewBox="0 0 18 18" fill="#fff" stroke="#777" strokeLinejoin="round"><path d="M9 1l2.300 5.400 5.900.5-4.500 3.900 1.400 5.700L9 13.500l-5.100 3 1.400-5.700L.8 6.900l5.900-.5z" /></svg>
            </button>
          </Omnibox>
          <button aria-label="Chrome menu"><svg width="13" height="13" viewBox="0 0 13 13" stroke="#4a4a4a" strokeWidth="3" strokeLinecap="round"><path d="M1.500 1.500h10M1.500 6.500h10M1.500 11.500h10" /></svg></button>
        </Toolbar>

        <Bookmarks>
          {bookmarks.map((b) => (
            <Bookmark key={b.label} href="#">
              {b.icon}
              <Fade $width={b.width} $fade={b.fade}>{b.label}</Fade>
            </Bookmark>
          ))}
          <More aria-label="More bookmarks">»</More>
        </Bookmarks>

        <Page>
          <PageHeader><Title>Pedido Fácil</Title></PageHeader>
          <PageNav>{pages.map((p) => <a key={p} href="#">{p}</a>)}</PageNav>
          <Main>
            <Panel><Welcome>Bem vindo, Bom de quilo</Welcome></Panel>
          </Main>
          <PageFooter>
            <svg width="70" height="50" viewBox="0 0 70 50" role="img" aria-label="iFollow">
              <path d="M17 7h9l2 15 7-17h8l1 16 7-15 14-3-18 32-9-1-3-11-6 10-9-2z" fill="#2b0f0c" />
              <path d="M16 6h8l2 16 8-17h8v17l8-15 13-3-16 30-8-1-3-12-6 12-8-3-5-7z" fill="#ab2f21" />
              <path d="M16 16l8-10 2 16-6 4zM34 5h8l-2 16-7 4zM43 23l8-16 6-2-8 20z" fill="#c33f2b" opacity=".7" />
              <path d="M22 28l8-14 4-9 0 16-6 11zM45 33l14-19-11 20z" fill="#7d1f18" opacity=".7" />
              <text x="8" y="46" fontFamily="DejaVu Sans" fontWeight="700" fontSize="16" fill="#2e120e" stroke="#2e120e">Follow</text>
              <text x="2" y="46" fontFamily="DejaVu Sans" fontWeight="700" fontSize="18" fill="#b53324">i</text>
            </svg>
          </PageFooter>
        </Page>
      </Window>

      <Desktop>
        <DesktopLabel $left={12} $top={-11}>MavCorporateM</DesktopLabel>
        <DesktopLabel $left={21} $top={5}>otionDesign</DesktopLabel>
        <DesktopLabel $left={877} $top={9}>sts iFollow</DesktopLabel>
        <DesktopLabel $left={990} $top={11}>car</DesktopLabel>
        <Dock>
          {dock.map((d) => (
            <DockItem key={d.name} $running={d.on} aria-label={d.name}><Pic>{d.art}</Pic></DockItem>
          ))}
          <Separator>
            <svg width="18" height="53" viewBox="0 0 18 53"><path d="M4 27l6 18" stroke="#8a9299" /></svg>
          </Separator>
          <DockItem aria-label="Trash"><Trash /></DockItem>
        </Dock>
      </Desktop>
    </Screen>
  );
}
